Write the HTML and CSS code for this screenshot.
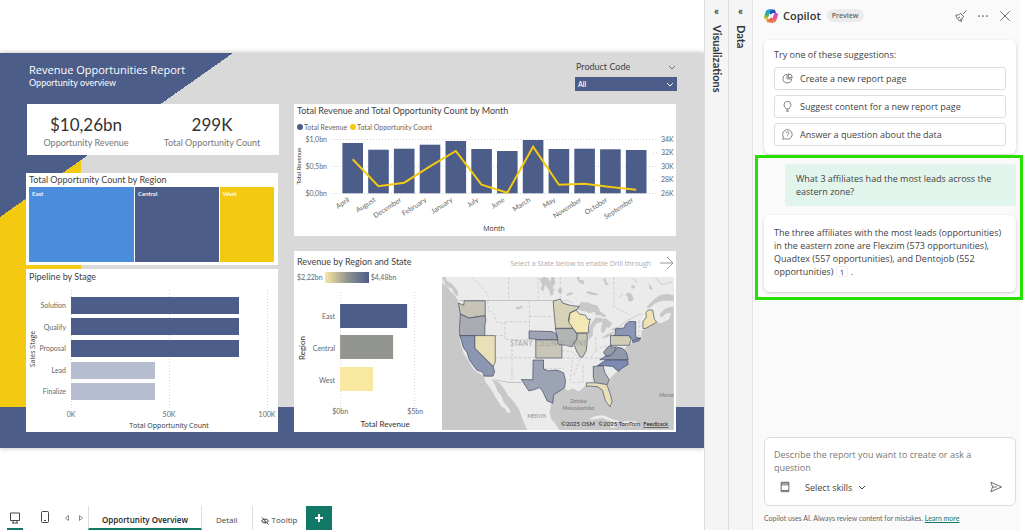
FILE: index.html
```html
<!DOCTYPE html>
<html lang="en">
<head>
<meta charset="utf-8">
<title>Revenue Opportunities Report</title>
<link rel="stylesheet" href="styles.css">
</head>
<body>
<div class="app">
  <main class="workspace">
    <section class="report">
      <div class="col col-left">
        <header class="report-head">
          <h1>Revenue Opportunities Report</h1>
          <p>Opportunity overview</p>
        </header>
        <div class="kpis">
          <div class="kpi"><strong>$10,26bn</strong><span>Opportunity Revenue</span></div>
          <div class="kpi"><strong>299K</strong><span>Total Opportunity Count</span></div>
        </div>
        <section class="panel treemap-panel">
          <h2>Total Opportunity Count by Region</h2>
          <div class="treemap">
            <div class="tile tile-east">East</div>
            <div class="tile tile-central">Central</div>
            <div class="tile tile-west">West</div>
          </div>
        </section>
        <section class="panel pipeline-panel">
          <h2>Pipeline by Stage</h2>
          <svg class="chart" viewBox="26 284 252 148" role="img" aria-label="Pipeline by Stage">
            <g class="grid"><path d="M71.500 290V410M169.500 290V410M267.500 290V410"/></g>
            <g class="fill-blue">
              <rect x="71" y="297" width="168" height="17"/>
              <rect x="71" y="318" width="168" height="17"/>
              <rect x="71" y="340" width="168" height="17"/>
            </g>
            <g class="fill-pale">
              <rect x="71" y="362" width="84" height="17"/>
              <rect x="71" y="383" width="84" height="17"/>
            </g>
            <g class="tick end">
              <text x="66" y="308">Solution</text>
              <text x="66" y="330">Qualify</text>
              <text x="66" y="351">Proposal</text>
              <text x="66" y="373">Lead</text>
              <text x="66" y="394">Finalize</text>
            </g>
            <g class="tick mid">
              <text x="71" y="417">0K</text>
              <text x="169" y="417">50K</text>
              <text x="267" y="417">100K</text>
            </g>
            <text class="axis small" x="169" y="428">Total Opportunity Count</text>
            <text class="axis small" transform="translate(35 349) rotate(-90)">Sales Stage</text>
          </svg>
        </section>
      </div>

      <div class="col col-right">
        <div class="slicer">
          <div class="slicer-head">
            <label for="product">Product Code</label>
            <svg class="chev" viewBox="0 0 8 5"><path d="M1 1l3 3 3-3"/></svg>
          </div>
          <div class="select-wrap">
            <select id="product"><option>All</option></select>
            <svg class="chev chev-over" viewBox="0 0 8 5"><path d="M1 1l3 3 3-3"/></svg>
          </div>
        </div>

        <section class="panel month-panel">
          <h2>Total Revenue and Total Opportunity Count by Month</h2>
          <div class="legend">
            <span class="key key-blue">Total Revenue</span>
            <span class="key key-yellow">Total Opportunity Count</span>
          </div>
          <svg class="chart" viewBox="294 133 382 103" role="img" aria-label="Revenue and opportunity count by month">
            <g class="grid"><path d="M331 139.500H657M331 166.500H657M331 193.500H657M653 153H658M653 180H658"/></g>
            <g class="fill-blue">
              <rect x="342.400" y="143" width="20.600" height="50.300"/>
              <rect x="368.200" y="149.700" width="20.600" height="43.600"/>
              <rect x="393.900" y="148.700" width="20.600" height="44.600"/>
              <rect x="419.700" y="144.700" width="20.600" height="48.600"/>
              <rect x="445.500" y="141" width="20.600" height="52.300"/>
              <rect x="471.300" y="149" width="20.600" height="44.300"/>
              <rect x="497" y="151" width="20.600" height="42.300"/>
              <rect x="522.800" y="140" width="20.600" height="53.300"/>
              <rect x="548.600" y="149" width="20.600" height="44.300"/>
              <rect x="574.300" y="148.700" width="20.600" height="44.600"/>
              <rect x="600.100" y="149.300" width="20.600" height="44"/>
              <rect x="625.900" y="150" width="20.600" height="43.300"/>
            </g>
            <polyline class="trend" points="352.700,159.300 378.400,186.300 404.200,182.700 430,166.300 455.800,151 481.500,184.700 507.300,192.700 533.100,146.700 558.900,184.700 584.600,183.700 610.400,187 636.200,189.700"/>
            <g class="tick end">
              <text x="327" y="142">$1,0bn</text>
              <text x="327" y="169">$0,5bn</text>
              <text x="327" y="196">$0,0bn</text>
              <text transform="translate(350 201) rotate(-33)">April</text>
              <text transform="translate(376 201) rotate(-33)">August</text>
              <text transform="translate(402 201) rotate(-33)">December</text>
              <text transform="translate(427 201) rotate(-33)">February</text>
              <text transform="translate(453 201) rotate(-33)">January</text>
              <text transform="translate(479 201) rotate(-33)">July</text>
              <text transform="translate(505 201) rotate(-33)">June</text>
              <text transform="translate(531 201) rotate(-33)">March</text>
              <text transform="translate(556 201) rotate(-33)">May</text>
              <text transform="translate(582 201) rotate(-33)">November</text>
              <text transform="translate(608 201) rotate(-33)">October</text>
              <text transform="translate(634 201) rotate(-33)">September</text>
            </g>
            <g class="tick">
              <text x="661" y="142">34K</text>
              <text x="661" y="155">32K</text>
              <text x="661" y="169">30K</text>
              <text x="661" y="182">28K</text>
              <text x="661" y="196">26K</text>
            </g>
            <text class="axis small" x="494" y="231">Month</text>
            <text class="axis tiny" transform="translate(301 166) rotate(-90)">Total Revenue</text>
          </svg>
        </section>

        <section class="panel state-panel">
          <div class="state-left">
            <h2>Revenue by Region and State</h2>
            <div class="ramp"><span>$2,22bn</span><i></i><span>$4,48bn</span></div>
            <svg class="chart" viewBox="294 285 148 147" role="img" aria-label="Revenue by region">
              <g class="grid"><path d="M340.500 292V407M414.500 292V407"/></g>
              <rect class="fill-blue" x="340" y="304" width="67" height="24"/>
              <rect class="fill-gray" x="340" y="335" width="53" height="24"/>
              <rect class="fill-cream" x="340" y="367" width="33" height="24"/>
              <g class="tick end">
                <text x="335" y="319">East</text>
                <text x="335" y="351">Central</text>
                <text x="335" y="383">West</text>
              </g>
              <g class="tick mid">
                <text x="340" y="414">$0bn</text>
                <text x="415" y="414">$5bn</text>
              </g>
              <text class="axis" x="385" y="427">Total Revenue</text>
              <text class="axis" transform="translate(305 348) rotate(-90)">Region</text>
            </svg>
          </div>
          <div class="state-right">
            <div class="drill">
              <span>Select a State below to enable Drill through</span>
              <svg viewBox="0 0 14 14"><path d="M0 7H13M7 1l6 6-6 6"/></svg>
            </div>
            <svg class="map" viewBox="23 96 692 457" role="img" aria-label="Map of revenue by state">
              <rect class="water" x="23" y="96" width="692" height="457"/>
              <path class="land" d="M34 96L23 96 23 113 38 124 48 139 61 151 72 168 76 190 79 210 75 240 74 270 78 295 88 325 104 350 118 372 130 382 148 392 153 410 170 432 180 450 190 466 200 482 212 489 219 502 228 501 222 487 206 468 199 449 189 438 181 417 170 400 179 404 195 412 208 430 220 450 238 469 252 490 259 508 267 530 278 553 373 553 360 532 349 520 344 499 350 473 354 452 369 434 386 427 398 435 415 429 431 438 442 429 452 420 480 418 502 425 506 448 521 476 530 482 530 463 518 432 518 407 531 392 547 377 562 371 578 354 576 332 565 315 576 302 590 293 609 285 620 281 618 258 634 247 661 234 680 216 668 209 676 194 697 182 715 177 715 96Z"/>
              <path class="land" d="M624 201l25-16 22-8 44-5v12l-24 5-16 15-8 20-14 4zM672 224l21-20 15 0-8 18-22 12-13-2zM462 520l18-9 26-2 24 11 25 7-18 4-35-14-29 5zM561 529l14-4 27 3 14 10-28 5-22-5zM521 537l17 0 6 7-15 2z"/>
              <g class="water">
                <path d="M657 162l19-13 22-2 17 4v17l-34-1-20 7-16 13-13 0zM415 193l14-10 10-12 20 1 16 7 12 2 8 17 18 13-5 7-13-8-12 0-5-10-14 4-12-5-17-4zM461 283l-2-22 6-21 16-22 17-1 9 10-23 8-10 14-1 22zM496 222l17-2 18 14-7 13-10-1-5 13-10 5-1-17 4-12zM498 280l17-13 22-9 0 6-20 12zM526 252l23-8 8 7-16 7zM313 103l18-9 10 8 14 24 1 22-9 4-4-18-13-15-4 20-9-6 6-15zM350 96l9 0 2 20-8 8-7-12zM23 96l10 0 4 11 16 9 16 20 3 18-13-8-5-15-19-8zM424 96l10 0-2 8 14 2 1 12-12-3-6-8zM368 134l9-7 6 7-4 12-8-2zM396 145l18-4-3 8-17 4zM452 142l10-4 15 6 13 2-5 5-20-3zM571 147l12-5 7 7 5 12-5 8-11-1-1-10zM503 103l8-3 2 10 9 9-9 2zM641 121l9 3 2 10-10-2zM586 124l9-4 5 7-8 4zM241 187l23-6-3 8-14 4z"/>
              </g>
              <path class="shore" d="M562 145l-8 12M620 205l-44 20-28 22M640 115l10 16M660 97l20 22 30-9M594 101l12 13M350 128l10 9M382 170l12-6 19 10"/>
              <g class="borders">
                <path d="M74 166H360L383 173 408 183M180 403L224 411H259"/>
                <path class="dash" d="M113 96l19 20 27 29 3 22M222 96v70M310 96v70M376 96v69M536 96v90l50 24M159 167l3 28 17 14 7 22 25 4M284 167V257M284 214H357M211 230H284M211 230V283H284M182 271H211M182 337H302M232 283V405M381 338H500M326 344V370H387M380 315l32 5 20 18M412 344l-6 62M444 360V416M474 360V410M412 411h31M482 275v42l-17 22M482 317l20-13 20-4M423 316l12 24-19 52M602 230v45M612 225l-2 50M602 272h20"/>
              </g>
              <g class="states">
                <path fill="#c7c4b7" d="M89 167H152V212L132 214 103 219 92 213 78 207 72 174 88 180Z"/>
                <path fill="#a8abb1" d="M78 207L92 213 103 219 132 214 152 212 154 224 151 240V271H76L75 250Z"/>
                <path fill="#8b96b1" d="M76 271H121V308L176 364 180 379 175 392H149L144 380 127 374 115 358 104 342 98 322 86 305 81 286Z"/>
                <path fill="#e9e0b8" d="M121 271H182V350L176 363 121 308Z"/>
                <path fill="#9ea4b4" d="M283 257L352 259 363 265 369 284 H303V281H283Z"/>
                <path fill="#c9c6b7" d="M303 284H368L381 298V338H303Z"/>
                <path fill="#9ca3b4" d="M295 344H326V371L341 376 366 374 386 382 392 407 389 427 356 448 354 473 337 466 323 436 313 426 300 432 282 436 260 402 294 403Z"/>
                <path fill="#d8d2b7" d="M355 168L376 162 383 174 407 181 433 184 424 194 405 203 400 225 410 241 413 249H362L357 195Z"/>
                <path fill="#b3b5b5" d="M361 250H414L426 267 427 278 416 292 412 304 369 296 368 275Z"/>
                <path fill="#f3e7b6" d="M405 204L424 195 434 207 451 210 459 223 466 221 461 240 460 263H425L414 249 402 232Z"/>
                <path fill="#c7c5b6" d="M427 264H456L457 278 454 315 444 334 437 336 425 317 417 298 426 281Z"/>
                <path fill="#8b96b4" d="M541 267V251L567 248 571 237 582 229H601V276L616 279 596 288 581 271H534Z"/>
                <path fill="#d0ccb5" d="M527 271H581L588 282 582 300H526V270Z"/>
                <path fill="#8e98b3" d="M591 286l26-8-5 8-19 6z"/>
                <path fill="#969da9" d="M519 304L530 300V306L544 304 537 318 524 331 513 333 505 321Z"/>
                <path fill="#8f98ac" d="M494 343L510 333 527 331 539 318 547 306 562 309 574 322 579 343Z"/>
                <path fill="#7c89b0" d="M512 344H577L579 357 563 367 550 378 532 363 511 361H487Z"/>
                <path fill="#adb1b6" d="M475 363L504 361 509 381 522 402 516 418H482L475 395Z"/>
                <path fill="#e7dfb8" d="M454 412H482L515 417 525 444 531 467 525 484 511 466 502 434 488 424 470 422H454Z"/>
                <path fill="#f0e3b3" d="M623 230L633 216 632 202 639 194 652 195 657 222 664 231 632 249 623 250Z"/>
              </g>
              <g class="map-text">
                <text class="country" x="227" y="303">STANY ZJEDNOCZONE</text>
                <text class="sea" x="430" y="472">Zatoka</text>
                <text class="sea" x="430" y="492">Meksykańska</text>
                <text class="sea" x="693" y="453">Morze</text>
                <text class="mex" x="278" y="516">MEKSYK</text>
                <text class="credit" x="699" y="541">©2025 OSM&#160; ©2025 TomTom&#160; <tspan class="under">Feedback</tspan></text>
              </g>
            </svg>
          </div>
        </section>
      </div>
    </section>

    <footer class="tabs">
      <button class="view on" aria-label="Desktop layout"><svg viewBox="0 0 12 12"><path d="M1.500 1h9v7.500h-9zM4 8.500v2.500M8 8.500v2.500M3 11h6"/></svg></button>
      <button class="view phone" aria-label="Mobile layout"><svg viewBox="0 0 12 12"><rect x="2.500" y="0.500" width="7" height="11" rx="1"/><path d="M5 9.500h2"/></svg></button>
      <button class="arrow" aria-label="Previous page"><svg viewBox="0 0 4 6"><path d="M3.500.5v5L.5 3z"/></svg></button>
      <button class="arrow" aria-label="Next page"><svg viewBox="0 0 4 6"><path d="M.5.5v5l3-2.500z"/></svg></button>
      <button class="tab current">Opportunity Overview</button>
      <button class="tab">Detail</button>
      <button class="tab tip"><svg viewBox="0 0 8 8"><path d="M.5 4C2 1.500 6 1.500 7.500 4 6 6.500 2 6.500.5 4M1 .5l6.500 7M3 4.500a1.200 1.200 0 0 0 2 .5"/></svg>Tooltip</button>
      <button class="add" aria-label="New page"><svg viewBox="0 0 8 8"><path d="M4 0v8M0 4h8"/></svg></button>
    </footer>
  </main>

  <aside class="rail"><button aria-label="Expand Visualizations">«</button><h2>Visualizations</h2></aside>
  <aside class="rail"><button aria-label="Expand Data">«</button><h2>Data</h2></aside>

  <aside class="copilot">
    <header class="cp-head">
      <svg class="logo" viewBox="0 0 24 24">
        <defs>
          <linearGradient id="g1" x1="0" y1="0" x2="0" y2="1"><stop offset="0" stop-color="#1aa0e8"/><stop offset=".55" stop-color="#35b27c"/><stop offset="1" stop-color="#f4c020"/></linearGradient>
          <linearGradient id="g2" x1="0" y1="0" x2="0" y2="1"><stop offset="0" stop-color="#b05ae8"/><stop offset=".5" stop-color="#ea4c8c"/><stop offset="1" stop-color="#f58a4b"/></linearGradient>
          <linearGradient id="g3" x1="0" y1="0" x2="1" y2="1"><stop offset="0" stop-color="#1a6fd8"/><stop offset="1" stop-color="#2434a8"/></linearGradient>
          <linearGradient id="g4" x1="0" y1="0" x2="1" y2="0"><stop offset="0" stop-color="#f6a03a"/><stop offset="1" stop-color="#e5405c"/></linearGradient>
        </defs>
        <path fill="url(#g3)" d="M8 1h8.500c1.700 0 2.500 1 3 2.600L20.500 7H16c-1.400 0-2.200.8-2.600 2.200L12 12 9 7z"/>
        <path fill="url(#g4)" d="M16 23H7.500c-1.700 0-2.500-1-3-2.600L3.500 17H8c1.400 0 2.200-.8 2.600-2.200L12 12l3 5z"/>
        <path fill="url(#g1)" d="M8 1h5c-1.500.5-2.300 2-2.800 3.800L7.500 14c-.6 2-1.500 3-3.200 3H3C.6 17-.3 15.500.3 13L3 4.500C3.800 2.200 5.500 1 8 1z"/>
        <path fill="url(#g2)" d="M16 23h-5c1.500-.5 2.300-2 2.800-3.800l2.700-9.200c.6-2 1.500-3 3.200-3H21c2.400 0 3.300 1.500 2.700 4L21 19.500c-.8 2.300-2.500 3.500-5 3.500z"/>
        <path fill="#fafafa" d="M11 8.500h3L12.900 15.500h-3z"/>
      </svg>
      <h2>Copilot</h2>
      <span class="badge">Preview</span>
      <button class="icon push" aria-label="Clear chat"><svg viewBox="0 0 14 14"><path d="M13.500.5L9 5M6 3.500l4.500 4.500M6.500 4C5 5.500 3.500 6 1 6c.5 3.500 3 6.500 6.500 7.500 0-2.500 1-4 2.500-6M3.500 9.500L6 8M5.500 12l2-2"/></svg></button>
      <button class="icon" aria-label="More options"><svg viewBox="0 0 14 14"><path class="dots" d="M2.500 7h.01M7 7h.01M11.500 7h.01"/></svg></button>
      <button class="icon" aria-label="Close"><svg viewBox="0 0 14 14"><path d="M1.500 1.500l11 11M12.500 1.500l-11 11"/></svg></button>
    </header>

    <section class="card suggestions">
      <p>Try one of these suggestions:</p>
      <button><svg viewBox="0 0 12 12"><path d="M5.500 1.500a4.700 4.700 0 1 0 5 5h-5zM7 .7v4.300h4.300A4.500 4.500 0 0 0 7 .7z"/></svg>Create a new report page</button>
      <button><svg viewBox="0 0 12 12"><path d="M4.300 8.500C4.300 7 2.200 6.500 2.200 4.200a3.800 3.800 0 0 1 7.600 0C9.800 6.500 7.700 7 7.700 8.500zM4.500 10h3M5 11.500h2"/></svg>Suggest content for a new report page</button>
      <button><svg viewBox="0 0 12 12"><path d="M.8 11.200l.6-2.600A5.200 5.200 0 1 1 3.500 10.600zM4.600 4.600a1.500 1.500 0 1 1 2.200 1.300c-.6.300-.7.600-.7 1.200M6.100 8.500v.2"/></svg>Answer a question about the data</button>
    </section>

    <section class="highlight">
      <p class="question">What 3 affiliates had the most leads across the eastern zone?</p>
      <p class="card answer">The three affiliates with the most leads (opportunities) in the eastern zone are Flexzim (573 opportunities), Quadtex (557 opportunities), and Dentojob (552 opportunities) <a class="cite" href="#">1</a> .</p>
    </section>

    <form class="prompt">
      <textarea rows="2" aria-label="Message Copilot" placeholder="Describe the report you want to create or ask a question"></textarea>
      <div class="prompt-bar">
        <button type="button" class="icon" aria-label="Prompt guide"><svg viewBox="0 0 14 14"><path d="M2.500 1.500h9v11h-9zM2.500 2.500h9M2.500 4.500h9M2.500 11h9"/></svg></button>
        <button type="button" class="skills">Select skills <svg viewBox="0 0 8 5"><path d="M1 1l3 3 3-3"/></svg></button>
        <button type="submit" class="icon push" aria-label="Send"><svg viewBox="0 0 14 14"><path d="M1 1.500l12.500 5.500L1 12.500 3 7zM3 7H8"/></svg></button>
      </div>
    </form>
    <p class="note">Copilot uses AI. Always review content for mistakes. <a href="#">Learn more</a></p>
  </aside>
</div>
</body>
</html>
```

FILE: styles.css
```css
* { box-sizing: border-box; margin: 0; padding: 0; }

body {
  font-family: Lato, "Open Sans", sans-serif;
  font-size: 9px;
  color: #424242;
  background: #fff;
}

button { font: inherit; color: inherit; background: none; border: 0; }
svg { display: block; fill: none; stroke: currentColor; }
h1, h2 { font-weight: 400; }

.app { display: flex; height: 100vh; }

.workspace {
  flex: 1;
  min-width: 0;
  display: flex;
  flex-direction: column;
  justify-content: space-between;
}

/* Report canvas */
.report {
  margin-top: 53px;
  padding: 0 28px 16px 26px;
  display: grid;
  grid-template-columns: 252fr 382fr;
  column-gap: 16px;
  background:
    linear-gradient(to bottom right, #4c5d8a 50%, transparent 50%) 0 0 / 233px 164px no-repeat,
    linear-gradient(#4c5d8a, #4c5d8a) 0 100% / 100% 41px no-repeat,
    linear-gradient(#f3c911, #f3c911) 0 100% / 81px 288px no-repeat,
    #d9d9d9;
  box-shadow: 0 0 5px #b8b8b8;
}

.col { display: flex; flex-direction: column; min-width: 0; }

.report-head {
  height: 51px;
  padding: 9px 3px 0;
  color: #fff;
}
.report-head h1 { font-family: "Open Sans", sans-serif; font-size: 11px; line-height: 15px; }
.report-head p { font-size: 9px; line-height: 12px; }

.kpis {
  display: grid;
  grid-template-columns: 118fr 134fr;
  margin: 0 -1px 18px 1px;
  padding: 9px 0 5px;
  background: #fff;
  text-align: center;
}
.kpi { display: flex; flex-direction: column; }
.kpi strong { font-size: 17px; line-height: 23px; font-weight: 400; color: #333; }
.kpi span { font-size: 9px; line-height: 14px; color: #777; }

.panel { background: #fff; }
.panel h2 { padding-left: 3px; font-size: 9px; line-height: 14px; white-space: nowrap; }

.treemap-panel { padding-bottom: 3px; margin-bottom: 4px; }
.treemap { display: flex; gap: 1px; height: 75px; margin: 0 4px 0 3px; }
.tile { padding: 3px; font-size: 6px; line-height: 8px; font-weight: 600; color: #fff; }
.tile-east { flex: 107; background: #4a8ddc; }
.tile-central { flex: 84; background: #4c5d8a; }
.tile-west { flex: 52; background: #f3c911; }
.pipeline-panel { padding-top: 1px; }

.chart { width: 100%; stroke: none; }
.grid { stroke: #d4d4d4; stroke-width: 1; stroke-dasharray: 1 2; }
.fill-blue { fill: #4c5d8a; }
.fill-pale { fill: #b7bdd0; }
.fill-gray { fill: #939591; }
.fill-cream { fill: #f9e8a0; }
.trend { stroke: #f3c911; stroke-width: 2; }
.tick { font-size: 7px; fill: #666; }
.end { text-anchor: end; }
.mid { text-anchor: middle; }
.axis { font-size: 8px; fill: #333; text-anchor: middle; }
.small { font-family: "Open Sans", sans-serif; font-size: 7px; }
.tiny { font-size: 6px; }

.slicer {
  align-self: flex-end;
  width: 102px;
  height: 51px;
  margin-right: -1px;
  padding-top: 7px;
}
.slicer-head {
  display: flex;
  align-items: center;
  justify-content: space-between;
  padding: 0 1px;
  font-size: 9px;
  line-height: 14px;
}
.chev { width: 8px; height: 5px; color: #777; }
.select-wrap { position: relative; margin-top: 3px; }
.select-wrap select {
  display: block;
  width: 100%;
  height: 14px;
  padding-left: 3px;
  appearance: none;
  border: 0;
  border-radius: 0;
  background: #4c5d8a;
  color: #fff;
  font: 600 7px Lato, sans-serif;
}
.chev-over { position: absolute; right: 3px; top: 5px; color: #fff; pointer-events: none; }

.month-panel { margin-bottom: 15px; }
.legend {
  display: flex;
  gap: 3px;
  height: 15px;
  padding: 2px 0 0 3px;
  font-size: 7px;
  line-height: 14px;
  color: #666;
}
.key { display: flex; align-items: center; gap: 1px; }
.key::before { content: ""; width: 6px; height: 6px; border-radius: 50%; background: #4c5d8a; }
.key-yellow::before { background: #f3c911; }

.state-panel { display: flex; height: 181px; padding-top: 4px; }
.state-left { flex: 149; min-width: 0; display: flex; flex-direction: column; }
.ramp { display: flex; align-items: center; gap: 2px; padding: 2px 0 2px 3px; font-size: 7px; line-height: 12px; color: #666; }
.ramp i { width: 44px; height: 11px; background: linear-gradient(to right, #f9e8a0, #939591, #4c5d8a); }
.state-right { flex: 233; min-width: 0; padding-right: 2px; }
.drill {
  display: flex;
  align-items: center;
  justify-content: flex-end;
  gap: 9px;
  height: 22px;
  padding-bottom: 6px;
  font-family: "Open Sans", sans-serif;
  font-size: 7px;
  color: #aaa;
  white-space: nowrap;
}
.drill svg { width: 14px; height: 14px; color: #999; }

.map { width: 100%; }
.water { fill: #c8c8c8; stroke: none; }
.land { fill: #ebebeb; stroke: none; }
.shore { stroke: #d0d0d0; stroke-width: 3; }
.borders { stroke: #c2c2c2; stroke-width: 3; }
.dash { stroke-width: 2; stroke-dasharray: 9 5; }
.states { stroke: #3f4860; stroke-width: 2; stroke-linejoin: round; }
.map-text { stroke: none; fill: #8a8a8a; }
.country { fill: #a5a5a5; font-size: 20px; letter-spacing: 1px; }
.sea { font-size: 17px; font-style: italic; font-weight: 600; text-anchor: middle; fill: #858585; }
.mex { font-size: 14px; }
.credit { fill: #222; font-size: 18px; text-anchor: end; }
.under { text-decoration: underline; }

/* Page tabs */
.tabs { display: flex; height: 24px; color: #444; font-family: "Open Sans", sans-serif; }
.view { display: flex; justify-content: center; width: 16px; margin-left: 7px; padding-top: 6px; border-bottom: 2px solid transparent; }
.view svg { width: 12px; height: 12px; }
.on { border-color: #117865; }
.phone { margin: 0 7px 0 14px; padding-top: 5px; }
.arrow { display: flex; align-items: center; justify-content: center; width: 14px; color: #888; }
.arrow svg { width: 4px; height: 6px; }
.tab { display: flex; align-items: center; gap: 3px; padding: 2px 14px 0; border-right: 1px solid #ddd; font-size: 8px; white-space: nowrap; }
.current { border-left: 1px solid #ddd; border-bottom: 2px solid #117865; padding: 4px 13px 0; font-weight: 600; color: #222; }
.tip { padding: 2px 9px 0 8px; border: 0; }
.tip svg { width: 8px; height: 8px; margin-top: 4px; }
.add { display: grid; place-items: center; width: 26px; background: #117865; color: #fff; }
.add svg { width: 8px; height: 8px; stroke-width: 2; }

/* Collapsed panes */
.rail {
  flex: 0 0 24px;
  display: flex;
  flex-direction: column;
  align-items: center;
  background: #f5f5f5;
  border-left: 1px solid #ddd;
}
.rail button { height: 22px; font-size: 11px; line-height: 18px; font-weight: 700; }
.rail h2 { writing-mode: vertical-rl; margin-top: 3px; font-size: 11px; line-height: 14px; font-weight: 700; color: #333; }

/* Copilot pane */
.copilot {
  flex: 0 0 272px;
  display: flex;
  flex-direction: column;
  padding: 0 4px 6px 11px;
  background: #fafafa;
  border-left: 1px solid #e4e4e4;
  border-right: 4px solid #fff;
  font-family: "Open Sans", sans-serif;
}
.cp-head { display: flex; align-items: center; height: 31px; margin-bottom: 9px; }
.logo { width: 14px; height: 14px; stroke: none; }
.cp-head h2 { margin: 0 6px 0 5px; font-size: 11px; line-height: 16px; font-weight: 600; color: #333; }
.badge { padding: 0 5px; border-radius: 7px; background: #ebebeb; font-size: 7px; line-height: 13px; font-weight: 600; color: #666; }
.icon { display: grid; place-items: center; width: 22px; height: 22px; color: #555; }
.icon svg { width: 12px; height: 12px; }
.push { margin-left: auto; }
.dots { stroke-width: 2; stroke-linecap: round; }

.card { background: #fff; border-radius: 6px; box-shadow: 0 1px 3px #ccc; }
.suggestions { display: flex; flex-direction: column; gap: 5px; padding: 8px 10px 8px; }
.suggestions p { line-height: 14px; }
.suggestions button {
  display: flex;
  align-items: center;
  gap: 7px;
  height: 23px;
  padding: 0 7px;
  border: 1px solid #ddd;
  border-radius: 3px;
}
.suggestions svg { width: 11px; height: 11px; color: #777; }

.highlight {
  margin: 1px -7px 0 -9px;
  padding: 6px 4px 5px 6px;
  border: 3px solid #28e000;
}
.question { margin: 0 0 9px 21px; padding: 8px 11px; border-radius: 3px; background: #e2f5ec; line-height: 13px; }
.answer { padding: 11px 10px 14px; line-height: 13px; }
.cite { display: inline-block; padding: 0 3px; border: 1px solid #eee; border-radius: 2px; font-size: 8px; line-height: 9px; color: inherit; text-decoration: none; }

.prompt { margin-top: auto; padding: 10px 8px 7px 9px; border: 1px solid #ddd; border-radius: 6px; background: #fff; }
.prompt textarea { display: block; width: 100%; margin-bottom: 2px; border: 0; outline: 0; resize: none; overflow: hidden; font: inherit; line-height: 13px; background: none; }
.prompt textarea::placeholder { color: #777; }
.prompt-bar { display: flex; align-items: center; }
.skills { display: flex; align-items: center; gap: 6px; margin-left: 9px; }
.skills svg { width: 8px; height: 5px; }
.note { margin-top: 6px; font-family: Lato, sans-serif; font-size: 7px; line-height: 12px; color: #666; }
.note a { color: #117865; }
```
